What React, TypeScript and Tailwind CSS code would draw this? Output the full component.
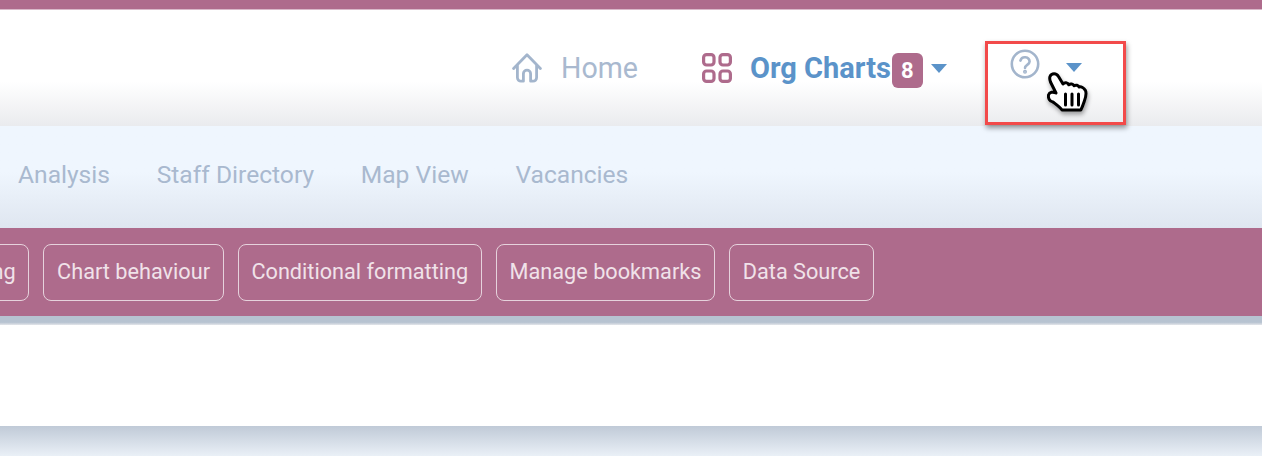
const MAUVE = '#ae6b8c';

const SUB_NAV = ['Analysis', 'Staff Directory', 'Map View', 'Vacancies'];
const CHIPS = ['Layout setting', 'Chart behaviour', 'Conditional formatting', 'Manage bookmarks', 'Data Source'];

function Caret({ className }: { className: string }) {
  return (
    <svg viewBox="0 0 16 9" className={className}>
      <path d="M0 0h16L8 9z" fill="#5b93c9" />
    </svg>
  );
}

function HomeIcon() {
  return (
    <svg viewBox="0 0 30 30" className="h-[30px] w-[30px]" fill="none" stroke="#a3b5cc" strokeWidth="2.8" strokeLinecap="round" strokeLinejoin="round">
      <path d="M1.6 15.4 15 1.8l13.4 13.6" />
      <path d="M5.4 13v11.6a3.6 3.6 0 0 0 3.6 3.6h2.4v-7.4a3.6 3.6 0 0 1 7.2 0v7.4H21a3.6 3.6 0 0 0 3.6-3.6V13" />
    </svg>
  );
}

function GridIcon() {
  return (
    <svg viewBox="0 0 30 30" className="h-[30px] w-[30px]" fill="none" stroke="#ae6b8c" strokeWidth="3.2">
      <rect x="1.6" y="1.6" width="10.4" height="10.4" rx="3" />
      <rect x="18" y="1.6" width="10.4" height="10.4" rx="3" />
      <rect x="1.6" y="18" width="10.4" height="10.4" rx="3" />
      <rect x="18" y="18" width="10.4" height="10.4" rx="3" />
    </svg>
  );
}

function HelpIcon() {
  return (
    <svg viewBox="0 0 30 30" className="h-[30px] w-[30px]" fill="none" stroke="#a3b5cc" strokeWidth="2.6" strokeLinecap="round">
      <circle cx="15" cy="15" r="13.2" />
      <path d="M10.4 11.6a4.7 4.7 0 0 1 9.2 1c0 3.2-4.6 3.4-4.6 6.4" />
      <circle cx="15" cy="22.8" r="0.7" fill="#a3b5cc" />
    </svg>
  );
}

function HandCursor() {
  return (
    <svg viewBox="0 0 42 42" className="h-[42px] w-[42px] drop-shadow-[1px_3px_2px_rgba(0,0,0,0.35)]">
      <path
        d="M3 4.5C4.5 .8 9.5 .8 11.5 4.5l4.5 7.5c1.5-1.8 4.8-1.6 5.8.8 1.6-1.3 4.4-1 5.2 1 2-1.2 4.2-.6 5 1.2 2.2-.6 5 .8 6.3 3.2 1.5 3 .5 7-1 11-1 3-2 6-3.5 8.8H15c-2-3-5-5-9-8C2.5 29.5 1 26 1.5 23c1-3 4.5-3.5 7.5-2L3.5 10C2.8 8 2.4 6 3 4.5z"
        fill="#fff"
        stroke="#000"
        strokeWidth="3"
        strokeLinejoin="round"
      />
      <path d="M18.5 22v11M25 22v11M31.5 22v11" stroke="#000" strokeWidth="3" strokeLinecap="round" />
    </svg>
  );
}

export default function App() {
  return (
    <div className="relative h-[456px] w-[1262px] overflow-hidden bg-white font-['Roboto',sans-serif]">
      <div className="h-[9px] bg-[#ae6b8c]" />
      <div className="h-px bg-[#d9b9c9]" />

      <header className="flex h-[116px] items-start bg-gradient-to-b from-white from-[62%] to-[#eaebee] pl-[512px]">
        <div className="flex items-center pt-[40px]">
          <HomeIcon />
          <span className="ml-[19px] text-[28.6px] leading-[36px] text-[#a9b9cf]">Home</span>
        </div>
        <div className="ml-[64px] flex items-center pt-[40px]">
          <GridIcon />
          <span className="ml-[18px] text-[29px] font-bold leading-[36px] text-[#5b93c9]">Org Charts</span>
          <span className="ml-px flex h-[35px] w-[31px] translate-y-[2px] items-center justify-center rounded-[6px] text-[22px] font-bold text-white" style={{ background: MAUVE }}>
            8
          </span>
          <Caret className="ml-[8px] h-[9px] w-[16px]" />
        </div>
        <div className="ml-[63px] flex items-center pt-[39px]">
          <HelpIcon />
          <Caret className="ml-[26px] mt-[7px] h-[9px] w-[16px]" />
        </div>
      </header>

      <nav className="flex h-[102px] items-start gap-[46.7px] bg-gradient-to-b from-[#eff6fe] from-[45%] to-[#dfe6f0] pl-[18px] pt-[32px]">
        {SUB_NAV.map((item) => (
          <span key={item} className="text-[24.6px] leading-[34px] text-[#a9b9cf]">
            {item}
          </span>
        ))}
      </nav>

      <div className="flex h-[88px] w-full items-start bg-[#ae6b8c] pt-[16px]">
        <div className="flex w-[874px] justify-end gap-[14px]">
          {CHIPS.map((chip) => (
            <span
              key={chip}
              className="flex h-[57px] shrink-0 items-center whitespace-nowrap rounded-[8px] border-[1.5px] border-[#e6d2dc] px-[12.7px] pb-[1px] text-[21.7px] text-[#f0e2e9]"
            >
              {chip}
            </span>
          ))}
        </div>
      </div>

      <div className="h-[9px] bg-gradient-to-b from-[#b7c3d1] from-[70%] to-[#e4e6ea]" />

      <div className="h-[101px] bg-white" />

      <div className="h-[30px] bg-gradient-to-b from-[#c0cad7] to-[#eaf0f7]" />

      <div className="absolute left-[985px] top-[41px] h-[84px] w-[141px] border-[3px] border-[#f24a4a] shadow-[1px_3px_5px_rgba(0,0,0,0.4)]" />
      <div className="absolute left-[1047px] top-[72px]">
        <HandCursor />
      </div>
    </div>
  );
}
